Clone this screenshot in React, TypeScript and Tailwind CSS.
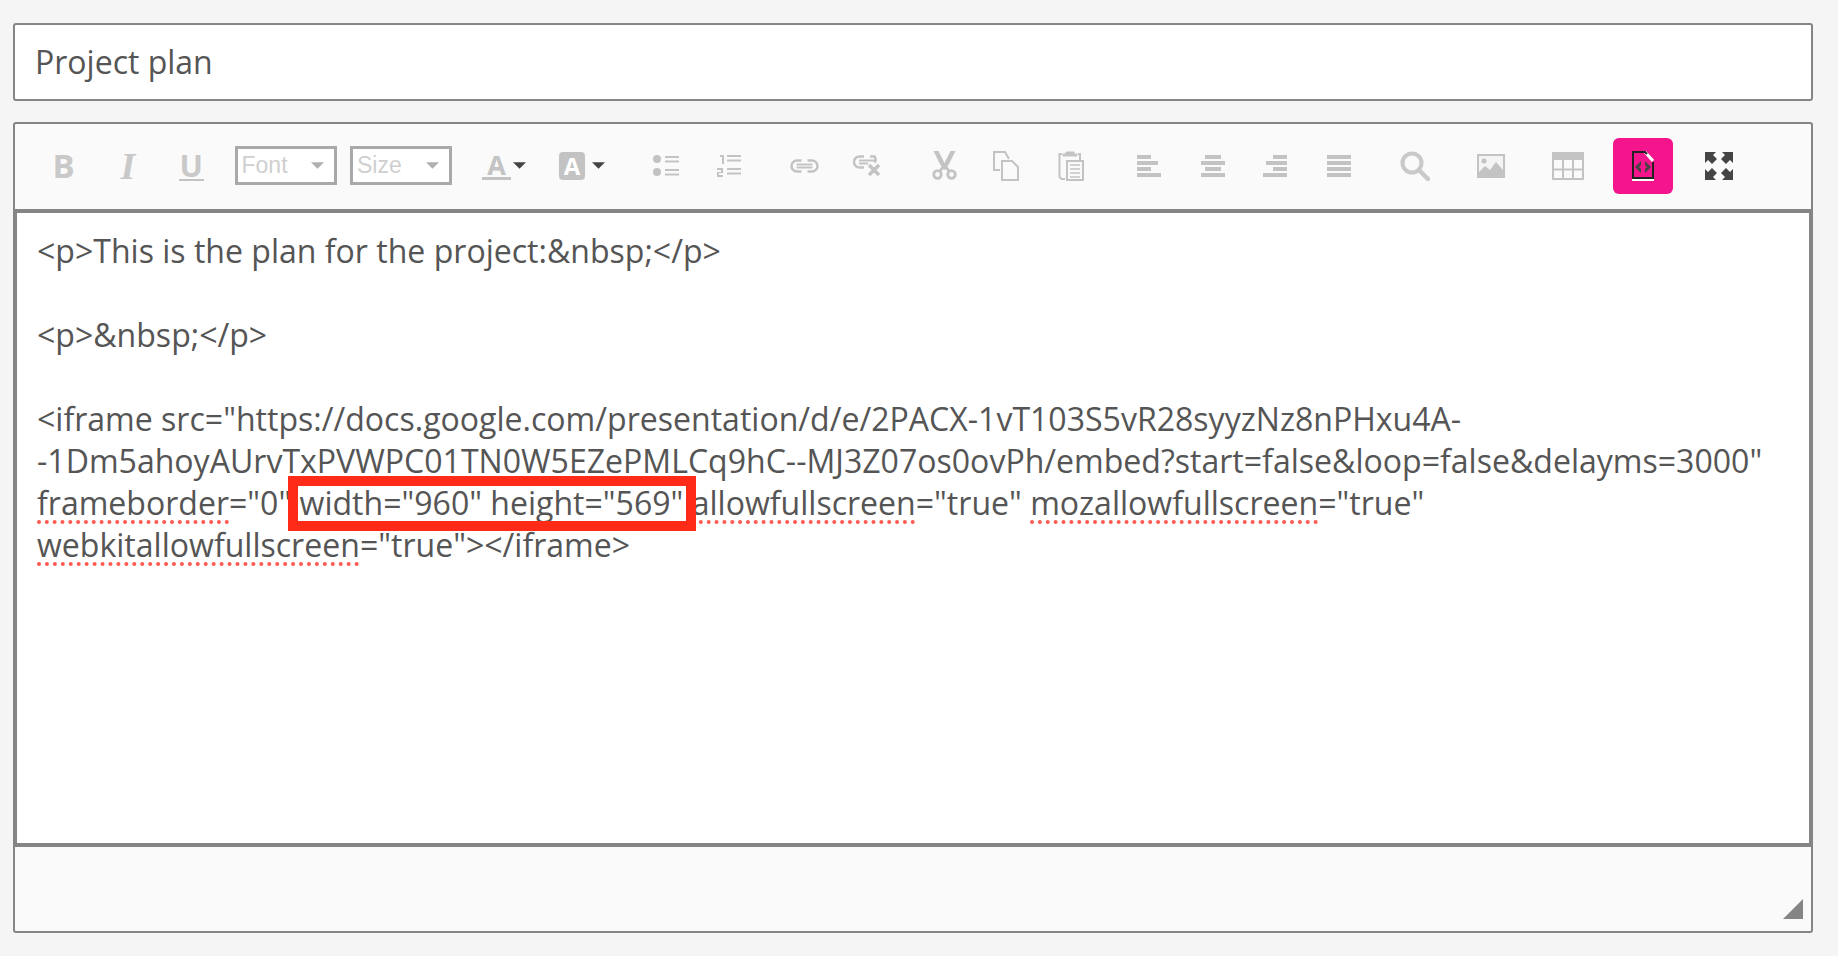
import type { ReactNode } from "react";

const ICON = "#c3c3c3";

function Group({ width, children }: { width: number; children: ReactNode }): JSX.Element {
  return (
    <div
      className="flex h-[61px] shrink-0 items-center rounded-[6px] border border-[#f9f9f9]"
      style={{ width }}
    >
      {children}
    </div>
  );
}

function Btn({ children, active, className }: { children: ReactNode; active?: boolean; className?: string }): JSX.Element {
  const base = active
    ? "flex h-[56px] flex-1 items-center justify-center rounded-[6px] bg-[#f4158c]"
    : "flex h-full flex-1 items-center justify-center";
  return (
    <button type="button" className={`${base} ${className ?? ""}`}>
      {children}
    </button>
  );
}

function Caret({ color }: { color: string }): JSX.Element {
  return (
    <svg width="13" height="7" viewBox="0 0 12 6">
      <path d="M0 0h12L6 6z" fill={color} />
    </svg>
  );
}

function SelectBox({ label }: { label: string }): JSX.Element {
  return (
    <div className="flex h-[39px] w-[102px] shrink-0 items-center justify-between border-[3px] border-[#a9a9a9] bg-white pl-[4px] pr-[10px]">
      <span className="font-['Liberation_Sans',sans-serif] text-[23px] text-[#cfcfcf]">{label}</span>
      <Caret color="#b0b0b0" />
    </div>
  );
}

function ListBullet(): JSX.Element {
  return (
    <svg width="26" height="22" viewBox="0 0 26 22" fill={ICON}>
      <circle cx="4" cy="4" r="4" />
      <circle cx="4" cy="17" r="4" />
      <path d="M12 1h14v2H12zM12 5.500h14v2H12zM12 14h14v2H12zM12 18.500h14v2H12z" />
    </svg>
  );
}

function ListNumber(): JSX.Element {
  return (
    <svg width="24" height="24" viewBox="0 0 24 24" fill={ICON}>
      <path d="M3 1h4v9H5V3H3zM10 1h14v2H10zM10 5.500h14v2H10zM10 14h14v2H10zM10 18.500h14v2H10z" />
      <path d="M0 14h6v5H2v2h4v2H0v-5h4v-2H0z" />
    </svg>
  );
}

function LinkIcon(): JSX.Element {
  return (
    <svg width="29" height="14" viewBox="0 0 28 14" fill="none" stroke={ICON} strokeWidth="2.500">
      <path d="M11 1.500H6.500a5 5 0 0 0 0 11H11M17 1.500h4.500a5 5 0 0 1 0 11H17" />
      <path d="M6 5.500h16M6 8.500h16" strokeWidth="2" />
    </svg>
  );
}

function UnlinkIcon(): JSX.Element {
  return (
    <svg width="28" height="21" viewBox="0 0 28 21" fill="none" stroke={ICON} strokeWidth="2.500">
      <path d="M11 1.500H6.500a5 5 0 0 0 0 11H11M17 1.500h4.500a5 5 0 0 1 0 6" />
      <path d="M6 5.500h16M6 8.500h9" strokeWidth="2" />
      <path d="M16 10l10 10M26 10L16 20" strokeWidth="3.500" />
    </svg>
  );
}

function CutIcon(): JSX.Element {
  return (
    <svg width="25" height="29" viewBox="0 0 25 29" fill="none" stroke={ICON}>
      <path d="M2 0l7 14 3 4h2l-2-6L6 0z" fill={ICON} strokeWidth="1" />
      <path d="M23 0l-7 14-3 4h-2l2-6L19 0z" fill={ICON} strokeWidth="1" />
      <circle cx="5.500" cy="23.500" r="3.800" strokeWidth="2.800" />
      <circle cx="19.500" cy="23.500" r="3.800" strokeWidth="2.800" />
      <path d="M8 20l3-4M17 20l-3-4" strokeWidth="2.800" />
    </svg>
  );
}

function CopyIcon(): JSX.Element {
  return (
    <svg width="26" height="30" viewBox="0 0 26 30" fill="none" stroke={ICON} strokeWidth="2">
      <path d="M7 19H1V1h11l4 7" />
      <path d="M9 10h10l6 6v13H9z" />
    </svg>
  );
}

function PasteIcon(): JSX.Element {
  return (
    <svg width="26" height="30" viewBox="0 0 26 30" fill="none" stroke={ICON} strokeWidth="2">
      <path d="M4 3H1.500v23l2 2H7M20 3h2v6" />
      <path d="M8 3V1h8v2h3v2H5V3z" fill={ICON} strokeWidth="1" />
      <path d="M9 10h16v19H9z" />
      <path d="M12 14h10M12 18h10M12 22h10M12 26h10" strokeWidth="1.600" />
    </svg>
  );
}

function AlignIcon({ rows }: { rows: Array<[number, number]> }): JSX.Element {
  return (
    <svg width="24" height="22" viewBox="0 0 24 22" fill={ICON}>
      {rows.map(([x, w], i) => (
        <rect key={i} x={x} y={i * 6} width={w} height="4" />
      ))}
    </svg>
  );
}

function SearchIcon(): JSX.Element {
  return (
    <svg width="30" height="30" viewBox="0 0 30 30" fill="none" stroke="#c9c9c9">
      <circle cx="12" cy="12" r="9.500" strokeWidth="4" />
      <path d="M19 19l9 9" strokeWidth="4.500" strokeLinecap="round" />
    </svg>
  );
}

function ImageIcon(): JSX.Element {
  return (
    <svg width="28" height="24" viewBox="0 0 28 24">
      <rect x="1" y="1" width="26" height="22" fill="#f4f4f4" stroke={ICON} strokeWidth="2" />
      <circle cx="7" cy="7" r="2.500" fill={ICON} />
      <path d="M2 22v-4l6-6 5 4 6-8 7 8v6z" fill={ICON} />
    </svg>
  );
}

function TableIcon(): JSX.Element {
  return (
    <svg width="32" height="28" viewBox="0 0 32 28" fill="none" stroke={ICON} strokeWidth="2">
      <path d="M0 0h32v8H0z" fill={ICON} stroke="none" />
      <path d="M1 8v19h30V8M11 8v19M21 8v19M1 17.500h30" />
    </svg>
  );
}

function CodeIcon(): JSX.Element {
  return (
    <svg width="22" height="30" viewBox="0 0 22 30">
      <path d="M13 1l8 9" fill="none" stroke="#fff" strokeWidth="3" />
      <path d="M21 11v16H1V1h12l2 2" fill="none" stroke="#222" strokeWidth="2" />
      <path d="M0 28h22v2H0z" fill="#fff" />
      <path d="M9 10l-6 6 6 6v-4l-2-2 2-2zM13 10l6 6-6 6v-4l2-2-2-2z" fill="#444" />
    </svg>
  );
}

function FullscreenIcon(): JSX.Element {
  return (
    <svg width="28" height="28" viewBox="0 0 28 28" fill="#444">
      <path d="M0 0h11L8 3l4 4-5 5-4-4-3 3zM28 0H17l3 3-4 4 5 5 4-4 3 3zM0 28h11l-3-3 4-4-5-5-4 4-3-3zM28 28H17l3-3-4-4 5-5 4 4 3-3z" />
    </svg>
  );
}

function Misspelled({ children }: { children: ReactNode }): JSX.Element {
  return (
    <span className="underline decoration-[#ff5a52] decoration-dotted decoration-[4px] underline-offset-[5px]">
      {children}
    </span>
  );
}

export default function App(): JSX.Element {
  return (
    <div className="min-h-[956px] bg-[#f5f5f5] pl-[13px] pt-[23px] font-['Open_Sans',sans-serif] text-[#555]">
      <div className="flex h-[78px] w-[1800px] items-center rounded-[3px] border-2 border-[#858585] bg-white pl-[20px] text-[32px]">
        Project plan
      </div>

      <div className="mt-[21px] w-[1800px] rounded-[3px] border-2 border-[#858585] bg-[#fafafa]">
        <div className="flex h-[85px] items-start gap-[13.500px] pl-[16px] pt-[11px]">
          <Group width={190}>
            <Btn className="pl-[3px]"><span className="font-['Open_Sans',sans-serif] text-[33px] font-bold leading-none text-[#c9c9c9]">B</span></Btn>
            <Btn className="pl-[7px]"><span className="font-['Liberation_Serif',serif] text-[38px] font-bold italic leading-none text-[#c9c9c9]">I</span></Btn>
            <Btn className="pl-[6px]">
              <span className="border-b-2 border-[#c3c3c3] px-[1px] font-['Open_Sans',sans-serif] text-[31px] font-bold leading-[28px] text-[#c9c9c9]">U</span>
            </Btn>
          </Group>
          <div className="flex h-[61px] items-center"><SelectBox label="Font" /></div>
          <div className="flex h-[61px] items-center"><SelectBox label="Size" /></div>
          <Group width={155}>
            <Btn className="pr-[3px]">
              <span className="mr-[2px] border-b-[3px] border-[#c3c3c3] px-[5px] font-['Open_Sans',sans-serif] text-[27px] font-bold leading-[25px] text-[#c3c3c3]">A</span>
              <Caret color="#444" />
            </Btn>
            <Btn>
              <span className="mr-[7px] flex h-[28px] w-[26px] items-center justify-center rounded-[4px] bg-[#c3c3c3] font-['Open_Sans',sans-serif] text-[24px] font-bold text-white">A</span>
              <Caret color="#444" />
            </Btn>
          </Group>
          <Group width={126}>
            <Btn className="pr-[2px]"><ListBullet /></Btn>
            <Btn><ListNumber /></Btn>
          </Group>
          <Group width={126}>
            <Btn className="pr-[4px]"><LinkIcon /></Btn>
            <Btn className="pr-[2px]"><UnlinkIcon /></Btn>
          </Group>
          <Group width={190}>
            <Btn><CutIcon /></Btn>
            <Btn className="pr-[2px]"><CopyIcon /></Btn>
            <Btn className="pl-[2px]"><PasteIcon /></Btn>
          </Group>
          <Group width={254}>
            <Btn className="pr-[2px]"><AlignIcon rows={[[0, 14], [0, 21], [0, 14], [0, 24]]} /></Btn>
            <Btn><AlignIcon rows={[[4, 16], [0, 24], [4, 16], [0, 24]]} /></Btn>
            <Btn><AlignIcon rows={[[10, 14], [3, 21], [10, 14], [0, 24]]} /></Btn>
            <Btn className="pl-[2px]"><AlignIcon rows={[[0, 24], [0, 24], [0, 24], [0, 24]]} /></Btn>
          </Group>
          <Group width={63}><Btn className="pr-[2px]"><SearchIcon /></Btn></Group>
          <Group width={62}><Btn className="pr-[2px]"><ImageIcon /></Btn></Group>
          <Group width={62}><Btn className="pl-[2px]"><TableIcon /></Btn></Group>
          <Group width={62}><Btn active><CodeIcon /></Btn></Group>
          <Group width={62}><Btn className="pl-[2px]"><FullscreenIcon /></Btn></Group>
        </div>

        <div className="h-[638px] border-x-2 border-y-[4px] border-[#858585] bg-white pl-[20px] pt-[17px] text-[32.05px] leading-[42px]">
          <div className="whitespace-nowrap">&lt;p&gt;This is the plan for the project:&amp;nbsp;&lt;/p&gt;</div>
          <div className="h-[42px]" />
          <div className="whitespace-nowrap">&lt;p&gt;&amp;nbsp;&lt;/p&gt;</div>
          <div className="h-[42px]" />
          <div className="whitespace-nowrap">&lt;iframe src="https://docs.google.com/presentation/d/e/2PACX-1vT103S5vR28syyzNz8nPHxu4A-</div>
          <div className="whitespace-nowrap">-1Dm5ahoyAUrvTxPVWPC01TN0W5EZePMLCq9hC--MJ3Z07os0ovPh/embed?start=false&amp;loop=false&amp;delayms=3000"</div>
          <div className="whitespace-nowrap">
            <Misspelled>frameborder</Misspelled>="0"{" "}
            <span className="relative">
              width="960" height="569"
              <span className="absolute -bottom-[7px] -left-[12px] -right-[13px] -top-[5px] border-[10px] border-[#ff2a17]" />
            </span>{" "}
            <Misspelled>allowfullscreen</Misspelled>="true" <Misspelled>mozallowfullscreen</Misspelled>="true"
          </div>
          <div className="whitespace-nowrap">
            <Misspelled>webkitallowfullscreen</Misspelled>="true"&gt;&lt;/iframe&gt;
          </div>
        </div>

        <div className="flex h-[84px] items-end justify-end pb-[12px] pr-[8px]">
          <svg width="20" height="20" viewBox="0 0 20 20">
            <path d="M20 0v20H0z" fill="#858585" />
          </svg>
        </div>
      </div>
    </div>
  );
}
